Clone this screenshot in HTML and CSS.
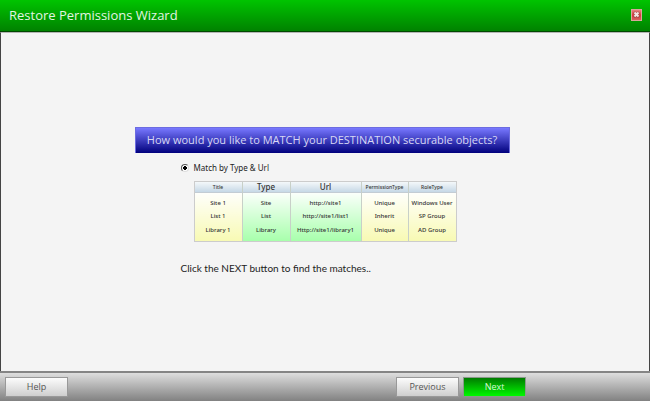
FILE: index.html
```html
<!DOCTYPE html>
<html lang="en">
<head>
<meta charset="utf-8">
<title>Restore Permissions Wizard</title>
<link rel="stylesheet" href="styles.css">
</head>
<body>
<header class="titlebar">
  <h1 class="title">Restore Permissions Wizard</h1>
  <button class="close" type="button" aria-label="Close">
    <svg viewBox="0 0 9 9" width="9" height="9" aria-hidden="true"><path class="x-shade" d="M2 2.200l5 5M7 2.200l-5 5"/><path class="x-mark" d="M2.500 2.500l4 4M6.500 2.500l-4 4"/></svg>
  </button>
</header>
<main class="page">
  <form class="step" id="step">
    <h2 class="question">How would you like to MATCH your DESTINATION securable objects?</h2>
    <div class="answers">
      <div class="option">
        <input class="radio" type="radio" id="match" name="match" checked>
        <label for="match">Match by Type &amp; Url</label>
      </div>
      <table class="sample">
        <colgroup><col class="c-title"><col class="c-type"><col class="c-url"><col class="c-perm"><col class="c-role"></colgroup>
        <thead>
          <tr><th>Title</th><th class="key">Type</th><th class="key">Url</th><th>PermissionType</th><th>RoleType</th></tr>
        </thead>
        <tbody>
          <tr><td>Site 1</td><td>Site</td><td>http://site1</td><td>Unique</td><td>Windows User</td></tr>
          <tr><td>List 1</td><td>List</td><td>http://site1/list1</td><td>Inherit</td><td>SP Group</td></tr>
          <tr><td>Library 1</td><td>Library</td><td>Http://site1/library1</td><td>Unique</td><td>AD Group</td></tr>
        </tbody>
      </table>
      <p class="hint">Click the NEXT button to find the matches..</p>
    </div>
  </form>
</main>
<footer class="actions">
  <button class="btn" type="button">Help</button>
  <div class="nav">
    <button class="btn" type="button">Previous</button>
    <button class="btn next" type="submit" form="step">Next</button>
  </div>
</footer>
</body>
</html>
```
FILE: styles.css
```css
* { box-sizing: border-box; }
body {
  margin: 0;
  min-height: 100vh;
  display: flex;
  flex-direction: column;
  background: #f4f4f4;
  font-family: "Open Sans", "Noto Sans", sans-serif;
  color: #222;
}
h1, h2, p { margin: 0; font-weight: 400; }

.titlebar {
  display: flex;
  align-items: center;
  justify-content: space-between;
  height: 32px;
  padding: 0 8px 2px 9px;
  background: linear-gradient(#00c400, #008200);
  border-bottom: 1px solid #004800;
}
.title { font-size: 13px; line-height: 18px; color: #e2f5e2; }
.close {
  display: flex;
  align-items: center;
  justify-content: center;
  width: 11px;
  height: 12px;
  padding: 0;
  border: 1px solid #dba59c;
  background: linear-gradient(#e98282, #d23c3c 50%, #d86060);
}
.close svg { flex: none; fill: none; }
.x-shade { stroke: #a04848; stroke-width: 3; }
.x-mark { stroke: #f4e4e4; stroke-width: 2; }

.page {
  flex: 1;
  padding: 94px 6px 0 0;
  border: 1px solid #444;
  border-top-color: #b5b5b5;
  border-bottom: 0;
}
.step { width: 375px; margin: 0 auto; }
.question {
  padding: 3px 0 4px;
  border: 1px solid #6c6ce0;
  border-width: 1px 1px 0;
  background: linear-gradient(#7878ff, #00007c);
  font-size: 11px;
  line-height: 18px;
  text-align: center;
  white-space: nowrap;
  color: #d8d8f4;
}
.answers { padding: 7px 0 0 46px; }
.option {
  display: flex;
  align-items: center;
  gap: 5px;
  font-family: "Noto Sans", sans-serif;
  font-size: 8px;
  line-height: 16px;
}
.radio {
  appearance: none;
  width: 8px;
  height: 8px;
  margin: 0;
  border: 1px solid;
  border-color: #555 #ddd #ddd #555;
  border-radius: 50%;
  background: radial-gradient(circle, #000 0 2px, #fff 2px);
}

.sample {
  width: 263px;
  margin: 5px 0 0 13px;
  table-layout: fixed;
  border-collapse: separate;
  border-spacing: 0;
  border: 1px solid #ccc;
  background: linear-gradient(to right, transparent 47px, #a8ffac 47px 167px, transparent 167px), #f8fab4;
  font-family: "Noto Sans", sans-serif;
  font-size: 6px;
  text-align: center;
  color: #333;
}
.c-title, .c-type { width: 48px; }
.c-url { width: 71px; }
.c-perm { width: 47px; }
.sample th, .sample td { padding: 0; border-right: 1px solid #c8d0c8; white-space: nowrap; }
.sample tr > :last-child { border-right: 0; }
.sample th {
  height: 11px;
  border-bottom: 1px solid #c3ccd4;
  background: linear-gradient(#f4f8fa, #c6d8e6);
  font-size: 5px;
  font-weight: 500;
  line-height: 10px;
}
.sample .key { font-size: 8px; }
.sample td { height: 13px; font-weight: 500; line-height: 13px; }
.sample tbody {
  background: linear-gradient(rgba(255, 255, 255, .95), rgba(255, 255, 255, 0));
}
.sample tbody tr:first-child td { height: 17px; padding-top: 3px; }
.sample tbody tr:last-child td { height: 18px; padding-bottom: 4px; }
.hint {
  margin-top: 18px;
  font-family: Lato, "Open Sans", sans-serif;
  font-size: 10px;
  line-height: 16px;
}

.actions {
  display: flex;
  align-items: center;
  justify-content: space-between;
  height: 30px;
  padding: 0 124px 0 5px;
  border-top: 2px solid #858585;
  background: linear-gradient(#dedede, #818181);
}
.nav { display: flex; gap: 4px; }
.btn {
  width: 63px;
  height: 20px;
  padding: 0;
  border: 1px solid #999;
  background: linear-gradient(#fcfcfc, #cecece);
  font-family: inherit;
  font-size: 9px;
  line-height: 18px;
  color: #555;
}
.next {
  border-color: #8a9a8a;
  background: linear-gradient(#007c00, #00f800);
  color: #d8f8d8;
}
```
